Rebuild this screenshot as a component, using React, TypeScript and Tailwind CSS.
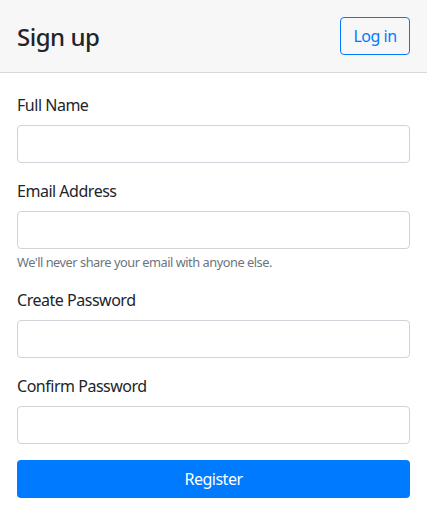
import React from 'react';

const font = { fontFamily: '"Noto Sans", "Open Sans", sans-serif' };

function Field({ label, type = 'text', help }: { label: string; type?: string; help?: string }) {
  return (
    <div className="mb-4">
      <label className="mb-2 block text-[16px] leading-6 text-[#212529]">{label}</label>
      <input
        type={type}
        className="block h-[38px] w-full rounded-[4px] border border-[#ced4da] bg-white px-3 text-[16px] text-[#495057] outline-none"
      />
      {help && <small className="mt-1 block text-[12.8px] leading-[19.2px] text-[#6c757d]">{help}</small>}
    </div>
  );
}

export default function App() {
  return (
    <div className="min-h-[507px] bg-white tracking-[-0.03em]" style={font}>
      <div className="flex h-[73px] items-center justify-between border-b border-[rgba(0,0,0,0.125)] bg-[#f7f7f7] px-[17px]">
        <h4 className="text-[24px] font-medium leading-[29px] text-[#212529]">Sign up</h4>
        <button className="h-[38px] w-[70px] rounded-[4px] border border-[#007bff] text-[16px] text-[#007bff]">
          Log in
        </button>
      </div>
      <form className="px-[17px] pt-5" onSubmit={(e) => e.preventDefault()}>
        <Field label="Full Name" />
        <Field label="Email Address" type="email" help="We'll never share your email with anyone else." />
        <Field label="Create Password" type="password" />
        <Field label="Confirm Password" type="password" />
        <button
          type="submit"
          className="block h-[38px] w-full rounded-[4px] bg-[#007bff] text-[16px] text-white"
        >
          Register
        </button>
      </form>
    </div>
  );
}
